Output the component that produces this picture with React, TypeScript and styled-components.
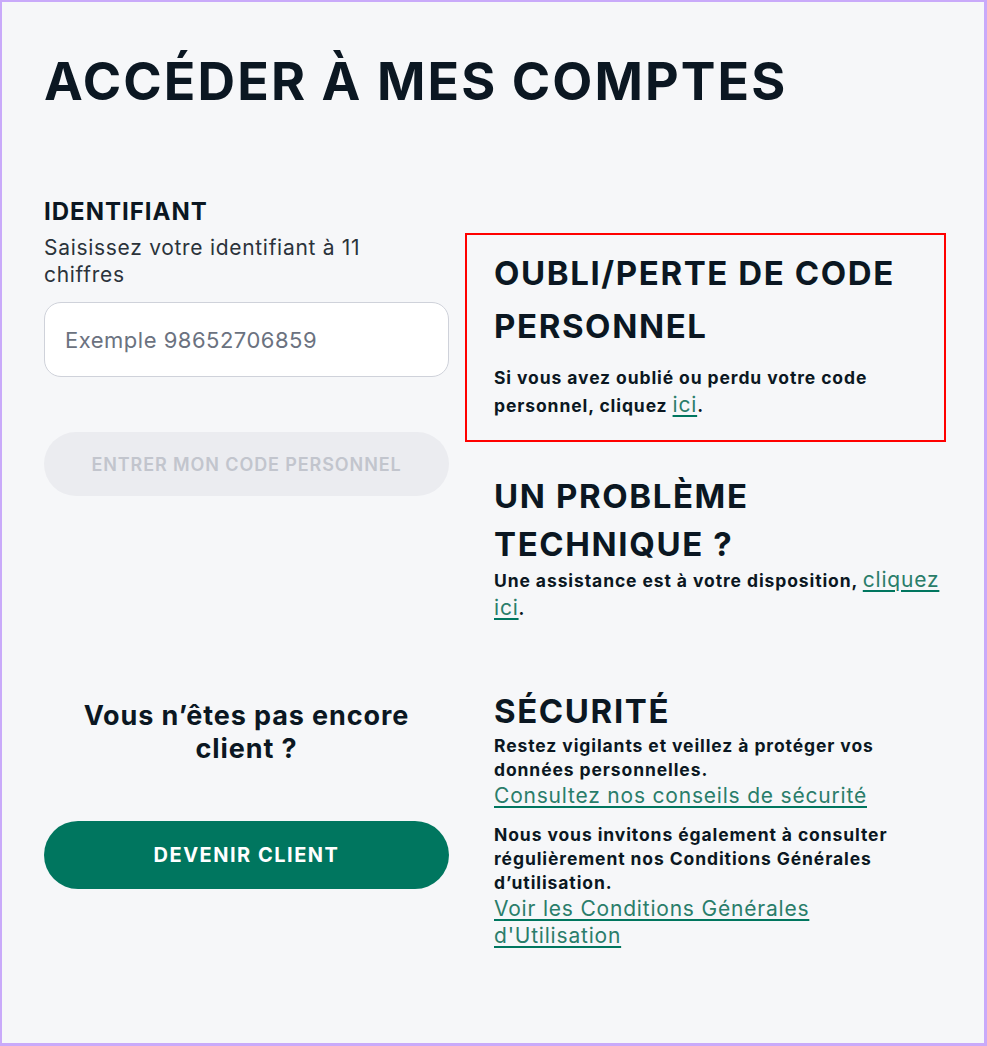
import styled, {createGlobalStyle} from "styled-components";

const GlobalStyle = createGlobalStyle`
  * {
    box-sizing: border-box;
  }
  body {
    margin: 0;
    background: #ffffff;
    font-family: Inter, "Noto Sans", sans-serif;
    color: #0b1722;
  }
`;

export default function App() {
    return (
        <>
            <GlobalStyle/>
            <Frame>
                <PageTitle>ACCÉDER À MES COMPTES</PageTitle>
                <Columns>
                    <LeftColumn>
                        <FieldLabel>IDENTIFIANT</FieldLabel>
                        <FieldHint>Saisissez votre identifiant à 11 chiffres</FieldHint>
                        <TextInput placeholder="Exemple 98652706859"/>
                        <PillButton disabled>ENTRER MON CODE PERSONNEL</PillButton>
                        <ProspectTitle>Vous n’êtes pas encore client ?</ProspectTitle>
                        <PillButton $primary>DEVENIR CLIENT</PillButton>
                    </LeftColumn>
                    <RightColumn>
                        <InfoBlock $highlighted>
                            <InfoTitle $lh={53}>OUBLI/PERTE DE CODE PERSONNEL</InfoTitle>
                            <InfoText $mt={11}>
                                Si vous avez oublié ou perdu votre code personnel, cliquez <Link href="#">ici</Link>.
                            </InfoText>
                        </InfoBlock>
                        <InfoBlock $mt={30}>
                            <InfoTitle $lh={48}>UN PROBLÈME TECHNIQUE ?</InfoTitle>
                            <InfoText $mt={-2}>
                                Une assistance est à votre disposition, <Link href="#">cliquez ici</Link>.
                            </InfoText>
                        </InfoBlock>
                        <InfoBlock $mt={69}>
                            <InfoTitle $lh={40}>SÉCURITÉ</InfoTitle>
                            <InfoText $mt={3} $lh={24}>
                                Restez vigilants et veillez à protéger vos données personnelles.
                            </InfoText>
                            <BlockLink href="#">Consultez nos conseils de sécurité</BlockLink>
                            <InfoText $mt={14} $lh={24}>
                                Nous vous invitons également à consulter régulièrement nos Conditions Générales
                                d’utilisation.
                            </InfoText>
                            <BlockLink href="#">Voir les Conditions Générales d'Utilisation</BlockLink>
                        </InfoBlock>
                    </RightColumn>
                </Columns>
            </Frame>
        </>
    );
}

const Frame = styled.div`
  width: 987px;
  height: 1046px;
  border: 2px solid #c9aafa;
  border-right-width: 3px;
  border-bottom-width: 3px;
  background: #f6f7f9;
  padding: 50px 38px 0 42px;
`;

const PageTitle = styled.h1`
  margin: 0;
  font-size: 52px;
  font-weight: 700;
  letter-spacing: 2.1px;
  line-height: 60px;
`;

const Columns = styled.div`
  display: grid;
  grid-template-columns: 405px 481px;
  column-gap: 16px;
  margin-top: 85px;
  align-items: start;
`;

const LeftColumn = styled.div`
  display: flex;
  flex-direction: column;
`;

const FieldLabel = styled.div`
  font-size: 24px;
  font-weight: 700;
  letter-spacing: 1px;
  line-height: 30px;
`;

const FieldHint = styled.div`
  margin-top: 7px;
  font-size: 21px;
  line-height: 27px;
  letter-spacing: 0.7px;
  color: #2b333b;
  padding-right: 40px;
`;

const TextInput = styled.input`
  margin-top: 14px;
  height: 75px;
  width: 100%;
  border: 1px solid #cfd2da;
  border-radius: 17px;
  background: #ffffff;
  padding: 0 20px;
  font-family: inherit;
  font-size: 22px;
  letter-spacing: 0.5px;
  color: #0b1722;
  outline: none;

  &::placeholder {
    color: #6b7280;
  }
`;

const PillButton = styled.button<{ $primary?: boolean }>`
  margin-top: ${({$primary}) => ($primary ? "56px" : "55px")};
  height: ${({$primary}) => ($primary ? "68px" : "64px")};
  width: 100%;
  border: none;
  border-radius: 40px;
  background: ${({$primary}) => ($primary ? "#00765f" : "#ebecf0")};
  color: ${({$primary}) => ($primary ? "#ffffff" : "#c2c5cd")};
  font-family: inherit;
  font-size: ${({$primary}) => ($primary ? "20px" : "18px")};
  font-weight: ${({$primary}) => ($primary ? 700 : 600)};
  letter-spacing: ${({$primary}) => ($primary ? "1.5px" : "0.9px")};
  cursor: pointer;
`;

const ProspectTitle = styled.div`
  margin-top: 203px;
  font-size: 27px;
  font-weight: 700;
  line-height: 33px;
  letter-spacing: 0.9px;
  text-align: center;
  padding: 0 30px;
`;

const RightColumn = styled.div`
  display: flex;
  flex-direction: column;
  margin-top: 36px;
`;

const InfoBlock = styled.section<{ $highlighted?: boolean; $mt?: number }>`
  margin-top: ${({$mt = 0}) => $mt}px;
  padding: ${({$highlighted}) => ($highlighted ? "12px 27px 21px" : "0 0 0 29px")};
  border: ${({$highlighted}) => ($highlighted ? "2px solid #ff0000" : "none")};
`;

const InfoTitle = styled.h2<{ $lh: number }>`
  margin: 0;
  font-size: 33px;
  font-weight: 700;
  line-height: ${({$lh}) => $lh}px;
  letter-spacing: 1.6px;
`;

const InfoText = styled.p<{ $mt?: number; $lh?: number }>`
  margin: ${({$mt = 0}) => $mt}px 0 0;
  font-size: 17.5px;
  font-weight: 700;
  line-height: ${({$lh = 27}) => $lh}px;
  letter-spacing: 0.9px;
  color: #0b1722;
`;

const Link = styled.a`
  color: #2a7d6a;
  font-size: 21px;
  font-weight: 400;
  letter-spacing: 0.8px;
  text-decoration: underline;
  text-decoration-color: #00765f;
  text-underline-offset: 3px;
  text-decoration-thickness: 2px;
`;

const BlockLink = styled(Link)`
  display: block;
  max-width: 400px;
  line-height: 27px;
`;
